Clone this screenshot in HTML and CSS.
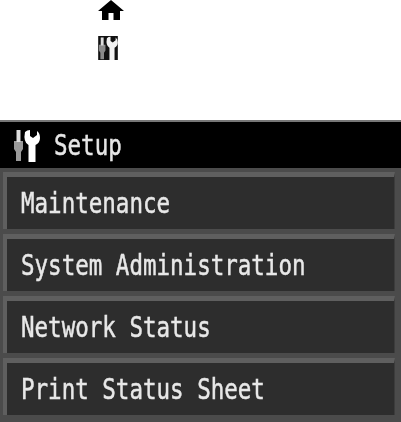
FILE: index.html
```html
<!DOCTYPE html>
<html lang="en">
<head>
<meta charset="utf-8">
<title>Setup</title>
<link rel="stylesheet" href="styles.css">
</head>
<body>
<div class="icons">
  <svg class="home" width="26" height="20" viewBox="0 0 26 20"><path fill="#000" d="M13 0 L26 11 H22 V20 H15.500 V13 H10.500 V20 H4 V11 H0 Z"/></svg>
  <svg class="tool-small" width="20" height="24" viewBox="0 0 27 33">
    <rect width="27" height="33" fill="#111"/>
    <path fill="#8a8a8a" d="M1 12h9v8l-2 3v9H3v-9l-2-3z"/>
    <path fill="#ddd" d="M3.500 2h4v11h-4z"/>
    <path fill="#f2f2f2" d="M12 3Q14 1 17 1v6l3 2 4-3v-4Q27 4 27 9q0 5-4.500 7v17h-7V16Q10 13 12 3z"/>
  </svg>
</div>
<main class="screen">
  <header class="title">
    <svg class="title-icon" width="27" height="33" viewBox="0 0 27 33">
      <path fill="#9a9a9a" d="M1 12h9v8l-2 3v9H3v-9l-2-3z"/>
      <path fill="#ddd" d="M3.500 1h4v12h-4z"/>
      <path fill="#fff" d="M12 3Q14 1 17 1v6l3 2 4-3v-4Q27 4 27 9q0 5-4.500 7v17h-7V16Q10 13 12 3z"/>
    </svg>
    <span class="label">Setup</span>
  </header>
  <div class="row"><span class="label">Maintenance</span></div>
  <div class="row"><span class="label">System Administration</span></div>
  <div class="row"><span class="label">Network Status</span></div>
  <div class="row"><span class="label">Print Status Sheet</span></div>
</main>
</body>
</html>
```
FILE: styles.css
```css
* { box-sizing: border-box; }
html, body { margin: 0; padding: 0; }
body { width: 401px; height: 422px; background: #fff; overflow: hidden; font-family: "DejaVu Sans Mono", "Liberation Mono", monospace; }
.icons { height: 120px; padding-left: 98px; display: flex; flex-direction: column; align-items: flex-start; }
.home { flex: none; filter: blur(.3px); }
.tool-small { flex: none; margin-top: 16px; filter: blur(.3px); }
.screen { height: 302px; background: #4b4b4b; border-top: 2px solid #777; display: flex; flex-direction: column; }
.title { height: 46px; flex: none; margin-bottom: 4px; background: #000; color: #e6e6e6; display: flex; align-items: center; gap: 14px; padding-left: 13px; }
.title-icon { flex: none; filter: blur(.5px); }
.label { display: inline-block; font-size: 29px; line-height: 34px; white-space: nowrap; -webkit-text-stroke: .5px currentColor; transform: scaleX(.776); transform-origin: left center; filter: blur(.6px); }
.row { flex: none; height: 57px; margin: 0 6px 5px 3px; background: #2d2d2d; border-top: 5px solid #5f5f5f; border-left: 4px solid #5f5f5f; border-right: 1px solid #3c3c3c; color: #e8e8e8; display: flex; align-items: center; padding-left: 14px; filter: blur(.5px); }
```
